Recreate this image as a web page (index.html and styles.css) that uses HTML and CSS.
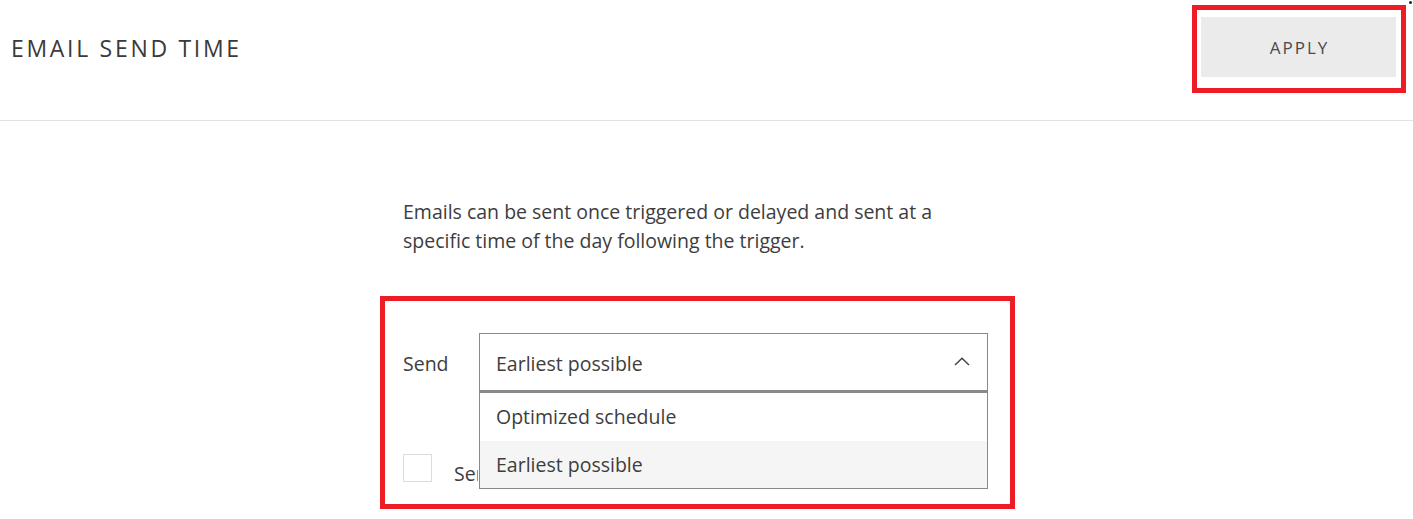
FILE: index.html
```html
<!DOCTYPE html>
<html lang="en">
<head>
<meta charset="utf-8">
<title>Email send time</title>
<link rel="stylesheet" href="styles.css">
</head>
<body>
<header class="topbar">
  <h1 class="title">EMAIL SEND TIME</h1>
  <div class="highlight highlight-apply">
    <button class="apply" type="button">APPLY</button>
  </div>
  <span class="corner-mark"></span>
</header>
<main class="content">
  <p class="intro">Emails can be sent once triggered or delayed and sent at a specific time of the day following the trigger.</p>
  <section class="highlight highlight-form">
    <div class="form-row">
      <label class="field-label">Send</label>
      <div class="select-wrap">
        <div class="select">
          <span class="select-value">Earliest possible</span>
          <svg class="chevron" width="16" height="9" viewBox="0 0 16 9"><path d="M1 8 L8 1.2 L15 8" fill="none" stroke="#444" stroke-width="1.5"/></svg>
        </div>
        <ul class="menu">
          <li class="menu-item">Optimized schedule</li>
          <li class="menu-item active">Earliest possible</li>
        </ul>
      </div>
    </div>
    <div class="check-row">
      <span class="checkbox"></span>
      <span class="check-label">Send at a specific time</span>
    </div>
  </section>
</main>
</body>
</html>
```

FILE: styles.css
```css
* { box-sizing: border-box; }
html, body { margin: 0; padding: 0; background: #fff; }
body {
  font-family: "Open Sans", "Noto Sans", "Liberation Sans", sans-serif;
  color: #3d3d3d;
  width: 1413px;
  height: 519px;
  overflow: hidden;
}
.topbar {
  position: relative;
  height: 121px;
  border-bottom: 1px solid #e2e2e2;
  display: flex;
  align-items: flex-start;
  justify-content: space-between;
}
.title {
  margin: 33px 0 0 11px;
  font-size: 23px;
  font-weight: 400;
  letter-spacing: 2.7px;
  line-height: 30px;
  color: #3a3a3a;
}
.highlight { border: 5px solid #ee1c25; }
.highlight-apply {
  margin: 5px 7px 0 0;
  padding: 7px 5px 11px 4px;
}
.apply {
  display: block;
  width: 195px;
  height: 60px;
  border: 0;
  background: #ebebeb;
  font-family: inherit;
  font-size: 17px;
  letter-spacing: 2px;
  color: #4a4a4a;
  padding: 0 0 0 2px;
}
.corner-mark {
  position: absolute;
  right: 1px;
  top: 1px;
  width: 3px;
  height: 3px;
  background: #222;
  border-radius: 50%;
}
.content { padding-top: 76px; }
.intro {
  margin: 0 0 41px 403px;
  width: 560px;
  font-size: 19.5px;
  line-height: 29px;
}
.highlight-form {
  margin-left: 380px;
  width: 635px;
  height: 213px;
  padding: 32px 22px 0 18px;
}
.form-row {
  display: flex;
  align-items: flex-start;
}
.field-label {
  width: 76px;
  font-size: 19.5px;
  line-height: 58px;
  padding-top: 2px;
}
.select-wrap {
  position: relative;
  width: 509px;
}
.select {
  height: 58px;
  border: 1px solid #8a8a8a;
  display: flex;
  align-items: center;
  justify-content: space-between;
  padding: 2px 17px 0 16px;
  font-size: 19.5px;
}
.chevron { display: block; margin-top: -3px; }
.menu {
  position: absolute;
  left: 0;
  top: 58px;
  width: 509px;
  margin: 0;
  padding: 0;
  list-style: none;
  background: #fff;
  border: 1px solid #8a8a8a;
  border-top: 2px solid #8a8a8a;
  z-index: 2;
}
.menu-item {
  height: 48px;
  line-height: 48px;
  padding-left: 16px;
  font-size: 19.5px;
}
.menu-item.active { background: #f5f5f5; height: 47px; }
.check-row {
  display: flex;
  align-items: center;
  margin-top: 55px;
}
.checkbox {
  width: 29px;
  height: 28px;
  border: 1px solid #dcdcdc;
}
.check-label {
  margin-left: 22px;
  margin-top: 12px;
  width: 24px;
  overflow: hidden;
  white-space: nowrap;
  font-size: 19.5px;
}
```
